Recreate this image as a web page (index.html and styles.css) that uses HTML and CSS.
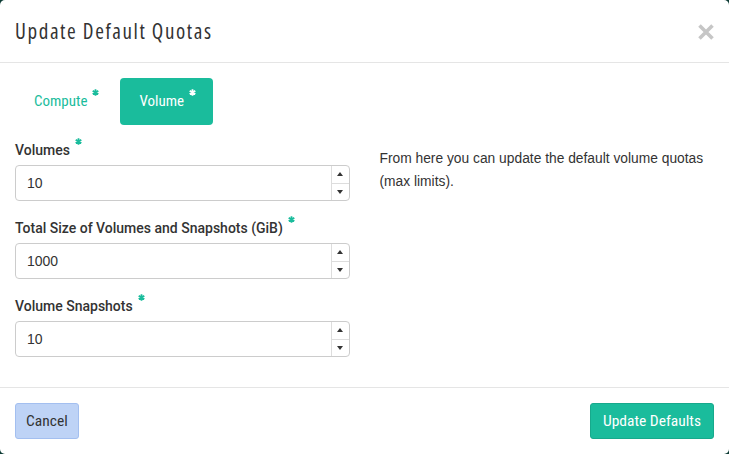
FILE: index.html
```html
<!DOCTYPE html>
<html>
<head>
<meta charset="utf-8">
<link rel="stylesheet" href="styles.css">
</head>
<body>
<div class="modal">
  <div class="modal-header">
    <h3 class="modal-title">Update Default Quotas</h3>
    <button class="close" aria-label="Close">
      <svg width="16" height="16" viewBox="0 0 16 16"><path d="M1.5 1.5 L14.5 14.5 M14.5 1.5 L1.5 14.5" stroke="#c6c6c6" stroke-width="3.6" stroke-linecap="butt"/></svg>
    </button>
  </div>
  <div class="modal-body">
    <ul class="tabs">
      <li class="tab">Compute<svg class="req" viewBox="0 0 8 8"><path d="M4 0.3V7.7M0.8 2.15L7.2 5.85M7.2 2.15L0.8 5.85"/></svg></li>
      <li class="tab active">Volume<svg class="req" viewBox="0 0 8 8"><path d="M4 0.3V7.7M0.8 2.15L7.2 5.85M7.2 2.15L0.8 5.85"/></svg></li>
    </ul>
    <div class="pane">
      <div class="fields">
        <div class="group">
          <label class="label">Volumes<svg class="req" viewBox="0 0 8 8"><path d="M4 0.3V7.7M0.8 2.15L7.2 5.85M7.2 2.15L0.8 5.85"/></svg></label>
          <div class="num"><span class="val">10</span><span class="spin"><span class="arrow up"></span><span class="arrow down"></span></span></div>
        </div>
        <div class="group">
          <label class="label">Total Size of Volumes and Snapshots (GiB)<svg class="req" viewBox="0 0 8 8"><path d="M4 0.3V7.7M0.8 2.15L7.2 5.85M7.2 2.15L0.8 5.85"/></svg></label>
          <div class="num"><span class="val">1000</span><span class="spin"><span class="arrow up"></span><span class="arrow down"></span></span></div>
        </div>
        <div class="group">
          <label class="label">Volume Snapshots<svg class="req" viewBox="0 0 8 8"><path d="M4 0.3V7.7M0.8 2.15L7.2 5.85M7.2 2.15L0.8 5.85"/></svg></label>
          <div class="num"><span class="val">10</span><span class="spin"><span class="arrow up"></span><span class="arrow down"></span></span></div>
        </div>
      </div>
      <div class="help">
        <p>From here you can update the default volume quotas (max limits).</p>
      </div>
    </div>
  </div>
  <div class="modal-footer">
    <button class="btn btn-cancel">Cancel</button>
    <button class="btn btn-primary">Update Defaults</button>
  </div>
</div>
</body>
</html>
```
FILE: styles.css
```css
html, body {
  margin: 0;
  padding: 0;
  background: #0d3b34;
}
.modal {
  width: 729px;
  height: 454px;
  background: #fff;
  border-radius: 5px;
  overflow: hidden;
  display: flex;
  flex-direction: column;
  font-family: "Liberation Sans", Arial, sans-serif;
  color: #333;
}
.modal-header {
  height: 62px;
  border-bottom: 1px solid #e5e5e5;
  padding: 0 15px;
  display: flex;
  align-items: center;
  justify-content: space-between;
}
.modal-title {
  margin: 0;
  font-family: "Open Sans", sans-serif;
  font-stretch: 75%;
  font-weight: normal;
  font-size: 21px;
  letter-spacing: 1.6px;
  color: #333;
  line-height: 28px;
}
.close {
  border: 0;
  background: none;
  padding: 0;
  width: 16px;
  height: 16px;
  display: flex;
  margin-top: 1px;
}
.modal-body {
  padding: 15px 15px 15px;
  flex: 1;
}
.tabs {
  list-style: none;
  margin: 0 0 15px;
  padding: 0;
  display: flex;
  gap: 2px;
}
.tab {
  font-family: Roboto, sans-serif;
  font-stretch: 75%;
  font-size: 15px;
  line-height: 17px;
  padding: 15px 19px 15px 19px;
  border-radius: 4px;
  color: #1abc9c;
}
.tab.active {
  background: #1abc9c;
  color: #fff;
  padding-right: 17px;
}
.req {
  width: 7px;
  height: 7px;
  display: inline-block;
  vertical-align: top;
  margin-left: 5px;
  margin-top: -2px;
  stroke: #1abc9c;
  stroke-width: 2;
  fill: none;
}
.tab .req {
  margin-left: 5px;
  margin-top: -4px;
}
.tab.active .req {
  stroke: #fff;
}
.pane {
  display: grid;
  grid-template-columns: 1fr 1fr;
  column-gap: 30px;
}
.group {
  margin-bottom: 17px;
}
.group:last-child {
  margin-bottom: 15px;
}
.label {
  display: block;
  font-family: Roboto, "Liberation Sans", sans-serif;
  font-weight: 500;
  font-size: 14px;
  line-height: 20px;
  margin-bottom: 5px;
  color: #333;
}
.num {
  height: 36px;
  box-sizing: border-box;
  border: 1px solid #ccc;
  border-radius: 4px;
  display: flex;
  align-items: stretch;
}
.val {
  flex: 1;
  padding-left: 11px;
  font-size: 14px;
  line-height: 34px;
  color: #333;
}
.spin {
  width: 17px;
  border-left: 1px solid #ddd;
  display: flex;
  flex-direction: column;
}
.arrow {
  flex: 1;
  display: flex;
  align-items: center;
  justify-content: center;
}
.arrow.up {
  border-bottom: 1px solid #ddd;
}
.arrow::before {
  content: "";
  width: 0;
  height: 0;
  border-left: 3.5px solid transparent;
  border-right: 3.5px solid transparent;
}
.arrow.up::before {
  border-bottom: 4px solid #333;
}
.arrow.down::before {
  border-top: 4px solid #333;
}
.help p {
  margin: 7px 0 0;
  font-size: 13.8px;
  line-height: 23px;
  color: #333;
}
.modal-footer {
  border-top: 1px solid #e5e5e5;
  padding: 15px;
  display: flex;
  justify-content: space-between;
}
.btn {
  height: 36px;
  box-sizing: border-box;
  border-radius: 3px;
  font-family: Roboto, sans-serif;
  font-stretch: 75%;
  font-weight: 400;
  font-size: 15.5px;
  padding: 0 12px;
  border: 1px solid transparent;
}
.btn-cancel {
  background: #bed3f6;
  border-color: #a3bff0;
  color: #333;
  padding: 0 10px;
}
.btn-primary {
  background: #1abc9c;
  border-color: #17a98c;
  color: #fff;
}
```
